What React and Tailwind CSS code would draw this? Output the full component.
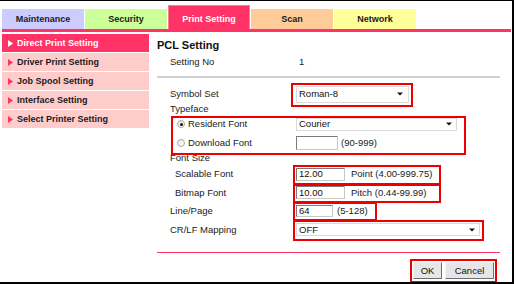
import React from "react";

function Arrow() {
  return (
    <svg width="6" height="4" viewBox="0 0 6 4" className="shrink-0">
      <path d="M0 0.5H6L3 3.5Z" fill="#111" />
    </svg>
  );
}

function Tri({ color }) {
  return (
    <svg width="5" height="7" viewBox="0 0 5 7" className="shrink-0">
      <path d="M0 0L5 3.5L0 7Z" fill={color} />
    </svg>
  );
}

function Select({ w, value }) {
  return (
    <div
      className={`${w} h-[13px] bg-white border border-[#d9d9d9] flex items-center justify-between pl-[2px] pr-[4px] text-[9.5px] leading-none text-[#111]`}
    >
      <span>{value}</span>
      <Arrow />
    </div>
  );
}

function Input({ w, value, h = "h-[13px]" }) {
  return (
    <div
      className={`${w} ${h} bg-white border border-t-[#7a7a7a] border-l-[#7a7a7a] border-r-[#c8c8c8] border-b-[#c8c8c8] flex items-center pl-[2px] text-[9.5px] leading-none text-[#111]`}
    >
      {value}
    </div>
  );
}

function Radio({ checked }) {
  return (
    <span className="w-[8px] h-[8px] rounded-full border border-[#a8a8a8] bg-gradient-to-br from-[#e8e8e8] to-white flex items-center justify-center shrink-0">
      {checked && <span className="w-[3px] h-[3px] rounded-full bg-[#111]" />}
    </span>
  );
}

function Row({ h, label, indent = "pl-[13px]", children }) {
  return (
    <div className={`flex items-center ${h}`}>
      <div className={`w-[139px] shrink-0 ${indent} text-[9.5px] leading-none`}>{label}</div>
      <div className="flex items-center">{children}</div>
    </div>
  );
}

export default function App() {
  const tabs = [
    { label: "Maintenance", cls: "bg-[#ccccff] text-[#1a1a2a] h-[20px]" },
    { label: "Security", cls: "bg-[#ccff99] text-[#1a1a1a] h-[20px]" },
    { label: "Print Setting", cls: "bg-[#ff3366] text-white h-[24px] border border-b-0 border-[#ff7a98] pt-[3px]" },
    { label: "Scan", cls: "bg-[#ffcc99] text-[#1a1a1a] h-[20px]" },
    { label: "Network", cls: "bg-[#ffff99] text-[#1a1a1a] h-[20px]" },
  ];
  const side = [
    "Direct Print Setting",
    "Driver Print Setting",
    "Job Spool Setting",
    "Interface Setting",
    "Select Printer Setting",
  ];
  return (
    <div className="relative w-[514px] h-[284px] border-t border-r-2 border-b-2 border-black bg-white font-['Liberation_Sans',Arial,sans-serif] text-[#1a1a1a] overflow-hidden">
      {/* Tabs */}
      <div className="flex items-end h-[28px] pl-[2px] gap-[1px]">
        {tabs.map((t) => (
          <div
            key={t.label}
            className={`w-[82px] flex items-center justify-center text-[9px] font-bold leading-none ${t.cls}`}
          >
            {t.label}
          </div>
        ))}
      </div>
      <div className="ml-[2px] mr-[1px] h-[3px] bg-[#ff3366]" />

      <div className="flex mt-[2px] pl-[2px]">
        {/* Sidebar */}
        <div className="w-[147px] shrink-0 flex flex-col gap-[1px]">
          {side.map((s, i) => (
            <div
              key={s}
              className={`h-[18px] flex items-center pl-[6px] text-[9px] font-bold leading-none ${
                i === 0 ? "bg-[#ff3366] text-white" : "bg-[#ffcccc] text-[#1a1a1a]"
              }`}
            >
              <Tri color={i === 0 ? "#ffffff" : "#ff3366"} />
              <span className="ml-[4px]">{s}</span>
            </div>
          ))}
        </div>

        {/* Main */}
        <div className="flex-1 pl-[8px] pr-[12px] flex flex-col">
          <div className="h-[22px] flex items-center text-[11px] font-bold leading-none text-[#111]">
            PCL Setting
          </div>
          <Row h="h-[12px]" label="Setting No">
            <span className="pl-[3px] text-[9.5px] leading-none">1</span>
          </Row>
          <div className="mt-[8px] h-[2px] bg-[#d0d0d0]" />
          <div className="mt-[6px]">
            <Row h="h-[20px]" label="Symbol Set">
              <div className="w-[113px] h-[17px] bg-white border border-[#dcdcdc] flex items-center justify-between pl-[2px] pr-[5px] text-[9.5px] leading-none text-[#111]">
                <span>Roman-8</span>
                <Arrow />
              </div>
            </Row>
          </div>
          <Row h="h-[10px]" label="Typeface" />
          <div className="flex items-center h-[20px]">
            <div className="w-[139px] shrink-0 pl-[20px] flex items-center text-[9.5px] leading-none">
              <Radio checked />
              <span className="ml-[3px]">Resident Font</span>
            </div>
            <Select w="w-[161px]" value="Courier" />
          </div>
          <div className="flex items-center h-[17px]">
            <div className="w-[139px] shrink-0 pl-[20px] flex items-center text-[9.5px] leading-none">
              <Radio />
              <span className="ml-[3px]">Download Font</span>
            </div>
            <Input w="w-[42px]" h="h-[14px]" value="" />
            <span className="ml-[3px] text-[9.5px] leading-none">(90-999)</span>
          </div>
          <Row h="h-[14px]" label="Font Size" />
          <Row h="h-[18px]" label="Scalable Font" indent="pl-[18px]">
            <Input w="w-[49px]" value="12.00" />
            <span className="ml-[6px] text-[9.5px] leading-none">Point (4.00-999.75)</span>
          </Row>
          <Row h="h-[19px]" label="Bitmap Font" indent="pl-[18px]">
            <Input w="w-[49px]" value="10.00" />
            <span className="ml-[6px] text-[9.5px] leading-none">Pitch (0.44-99.99)</span>
          </Row>
          <Row h="h-[18px]" label="Line/Page">
            <Input w="w-[37px]" h="h-[12px]" value="64" />
            <span className="ml-[4px] text-[9.5px] leading-none">(5-128)</span>
          </Row>
          <Row h="h-[19px]" label="CR/LF Mapping">
            <Select w="w-[184px]" value="OFF" />
          </Row>
          <div className="mt-[13px] h-[1px] bg-[#ff3366]" />
          <div className="mt-[9px] flex justify-end gap-[3px] pr-[6px]">
            <button className="w-[29px] h-[17px] bg-[#e6e6e6] border border-t-[#f4f4f4] border-l-[#f4f4f4] border-r-[#6e6e6e] border-b-[#6e6e6e] text-[9.5px] leading-none text-[#111]">
              OK
            </button>
            <button className="w-[49px] h-[17px] bg-[#e6e6e6] border border-t-[#f4f4f4] border-l-[#f4f4f4] border-r-[#6e6e6e] border-b-[#6e6e6e] text-[9.5px] leading-none text-[#111]">
              Cancel
            </button>
          </div>
        </div>
      </div>

      {/* Red annotation frames */}
      <div className="absolute left-[291px] top-[82px] w-[122px] h-[24px] border-2 border-[#ee0000] pointer-events-none" />
      <div className="absolute left-[171px] top-[115px] w-[295px] h-[39px] border-2 border-[#ee0000] pointer-events-none" />
      <div className="absolute left-[293px] top-[164px] w-[148px] h-[20px] border-2 border-[#ee0000] pointer-events-none" />
      <div className="absolute left-[293px] top-[183px] w-[148px] h-[19px] border-2 border-[#ee0000] pointer-events-none" />
      <div className="absolute left-[293px] top-[201px] w-[84px] h-[19px] border-2 border-[#ee0000] pointer-events-none" />
      <div className="absolute left-[293px] top-[219px] w-[191px] h-[21px] border-2 border-[#ee0000] pointer-events-none" />
      <div className="absolute left-[410px] top-[258px] w-[87px] h-[24px] border-2 border-[#ee0000] pointer-events-none" />
    </div>
  );
}
